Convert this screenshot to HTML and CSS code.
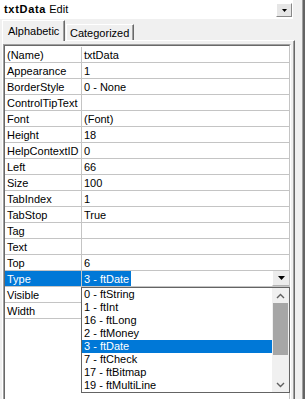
FILE: index.html
```html
<!DOCTYPE html>
<html lang="en">
<head>
    <meta charset="UTF-8">
    <meta name="viewport" content="width=device-width, initial-scale=1.0">
    <title>Properties</title>
    <link rel="stylesheet" href="styles.css">
</head>

<body>
    <div class="window">
        <div class="pane">
            <div class="combo">
                <span class="combo-text"><b>txtData</b> Edit</span>
                <span class="combo-btn">
                    <svg width="5" height="3" viewBox="0 0 5 3"><polygon points="0,0 5,0 2.5,3" fill="#000"/></svg>
                </span>
            </div>

            <div class="tabs">
                <div class="tab active">Alphabetic</div>
                <div class="tab">Categorized</div>
            </div>

            <div class="page">
                <div class="grid">
                    <div class="grid-inner">
                        <div class="row"><div class="name">(Name)</div><div class="value">txtData</div></div>
                        <div class="row"><div class="name">Appearance</div><div class="value">1</div></div>
                        <div class="row"><div class="name">BorderStyle</div><div class="value">0 - None</div></div>
                        <div class="row"><div class="name">ControlTipText</div><div class="value"></div></div>
                        <div class="row"><div class="name">Font</div><div class="value">(Font)</div></div>
                        <div class="row"><div class="name">Height</div><div class="value">18</div></div>
                        <div class="row"><div class="name">HelpContextID</div><div class="value">0</div></div>
                        <div class="row"><div class="name">Left</div><div class="value">66</div></div>
                        <div class="row"><div class="name">Size</div><div class="value">100</div></div>
                        <div class="row"><div class="name">TabIndex</div><div class="value">1</div></div>
                        <div class="row"><div class="name">TabStop</div><div class="value">True</div></div>
                        <div class="row"><div class="name">Tag</div><div class="value"></div></div>
                        <div class="row"><div class="name">Text</div><div class="value"></div></div>
                        <div class="row"><div class="name">Top</div><div class="value">6</div></div>
                        <div class="row selected">
                            <div class="name">Type</div>
                            <div class="value">
                                <span class="hl">3 - ftDate</span>
                                <span class="drop-btn">
                                    <svg width="7" height="4" viewBox="0 0 7 4"><polygon points="0,0 7,0 3.5,4" fill="#000"/></svg>
                                </span>
                            </div>
                            <div class="list">
                                <div class="items">
                                    <div class="item">0 - ftString</div>
                                    <div class="item">1 - ftInt</div>
                                    <div class="item">16 - ftLong</div>
                                    <div class="item">2 - ftMoney</div>
                                    <div class="item sel">3 - ftDate</div>
                                    <div class="item">7 - ftCheck</div>
                                    <div class="item">17 - ftBitmap</div>
                                    <div class="item">19 - ftMultiLine</div>
                                </div>
                                <div class="sb">
                                    <div class="sb-btn">
                                        <svg width="9" height="6" viewBox="0 0 9 6"><polyline points="1,5 4.5,1.5 8,5" fill="none" stroke="#606060" stroke-width="1.4"/></svg>
                                    </div>
                                    <div class="sb-track"><div class="thumb"></div></div>
                                    <div class="sb-btn">
                                        <svg width="9" height="6" viewBox="0 0 9 6"><polyline points="1,1 4.5,4.5 8,1" fill="none" stroke="#606060" stroke-width="1.4"/></svg>
                                    </div>
                                </div>
                            </div>
                        </div>
                        <div class="row"><div class="name">Visible</div><div class="value"></div></div>
                        <div class="row"><div class="name">Width</div><div class="value"></div></div>
                    </div>
                </div>
            </div>
        </div>
        <div class="edge"></div>
    </div>
</body>
</html>
```

FILE: styles.css
```css
body {
    margin: 0;
    background: #f0f0f0;
    font-family: "Liberation Sans", Arial, sans-serif;
    font-size: 11px;
    color: #000;
    overflow: hidden;
}

.window {
    display: flex;
    width: 305px;
    height: 399px;
}

.pane {
    width: 302px;
    display: flex;
    flex-direction: column;
}

.edge {
    width: 3px;
    background: #646464;
    border-left: 1px solid #a0a0a0;
    box-sizing: border-box;
}

/* object combo */
.combo {
    width: 293px;
    height: 19px;
    flex: none;
    background: #fff;
    display: flex;
    justify-content: space-between;
    align-items: flex-start;
}

.combo-text {
    padding: 2px 0 0 4px;
    line-height: 15px;
}

.combo-text b {
    letter-spacing: 0.7px;
}

.combo-btn {
    width: 14px;
    height: 12px;
    margin: 3px 1px 0 0;
    border: 1px solid;
    border-color: #fff #888 #888 #fff;
    background: #e6e6e6;
    display: flex;
    align-items: center;
    justify-content: center;
}

/* tabs */
.tabs {
    display: flex;
    height: 21px;
    flex: none;
}

.tab {
    box-sizing: border-box;
    border: 1px solid;
    border-color: #fff #696969 transparent #fff;
    border-bottom: none;
    box-shadow: inset -1px 0 #a0a0a0;
    line-height: 13px;
    background: #f0f0f0;
}

.tab.active {
    position: relative;
    z-index: 1;
    margin: 1px 0 0 2px;
    width: 63px;
    height: 21px;
    padding: 4px 0 0 5px;
}

.tab:not(.active) {
    margin: 5px 0 0 1px;
    width: 68px;
    height: 16px;
    padding: 2px 0 0 3px;
}

/* tab page */
.page {
    flex: 1;
    min-height: 0;
    overflow: hidden;
    width: 293px;
    margin-left: 2px;
    box-sizing: border-box;
    border-left: 1px solid #fff;
    border-top: 1px solid #fff;
    border-right: 1px solid #696969;
    box-shadow: inset -1px 0 #a0a0a0;
    padding-top: 3px;
}

.grid {
    width: 288px;
    height: 360px;
    box-sizing: border-box;
    border: 1px solid;
    border-color: #a0a0a0 #fff #fff #a0a0a0;
}

.grid-inner {
    height: 100%;
    box-sizing: border-box;
    border: 1px solid;
    border-color: #696969 #c4c4c4 #c4c4c4 #696969;
    background: #fff;
    padding-top: 1px;
}

.row {
    position: relative;
    display: flex;
    height: 16px;
    box-sizing: border-box;
    border-bottom: 1px solid #c4c4c4;
}

.name {
    width: 77px;
    height: 15px;
    box-sizing: border-box;
    border-right: 1px solid #c4c4c4;
    padding-left: 2px;
    line-height: 16px;
    white-space: nowrap;
    overflow: hidden;
}

.value {
    flex: 1;
    height: 15px;
    padding-left: 2px;
    line-height: 16px;
    white-space: nowrap;
}

.selected .name {
    background: #0078d7;
    color: #fff;
}

.selected .value {
    display: flex;
    padding-left: 0;
}

.hl {
    height: 15px;
    padding: 0 2px;
    background: #0078d7;
    color: #fff;
}

.drop-btn {
    margin-left: auto;
    width: 17px;
    height: 15px;
    box-sizing: border-box;
    border-left: 1px solid #fff;
    border-bottom: 1px solid #b4b4b4;
    background: #ececec;
    display: flex;
    align-items: center;
    justify-content: center;
}

/* dropdown list */
.list {
    position: absolute;
    z-index: 2;
    top: 16px;
    left: 76px;
    width: 209px;
    height: 106px;
    box-sizing: border-box;
    border: 1px solid #646464;
    background: #fff;
    display: flex;
}

.items {
    flex: 1;
}

.item {
    height: 13px;
    line-height: 13px;
    padding-left: 2px;
    white-space: nowrap;
}

.item.sel {
    background: #0078d7;
    color: #fff;
}

.sb {
    width: 17px;
    display: flex;
    flex-direction: column;
    background: #f0f0f0;
}

.sb-btn {
    height: 15px;
    display: flex;
    align-items: center;
    justify-content: center;
}

.sb-track {
    flex: 1;
}

.thumb {
    height: 52px;
    margin: 0 1px;
    background: #a6a6a6;
}
```
